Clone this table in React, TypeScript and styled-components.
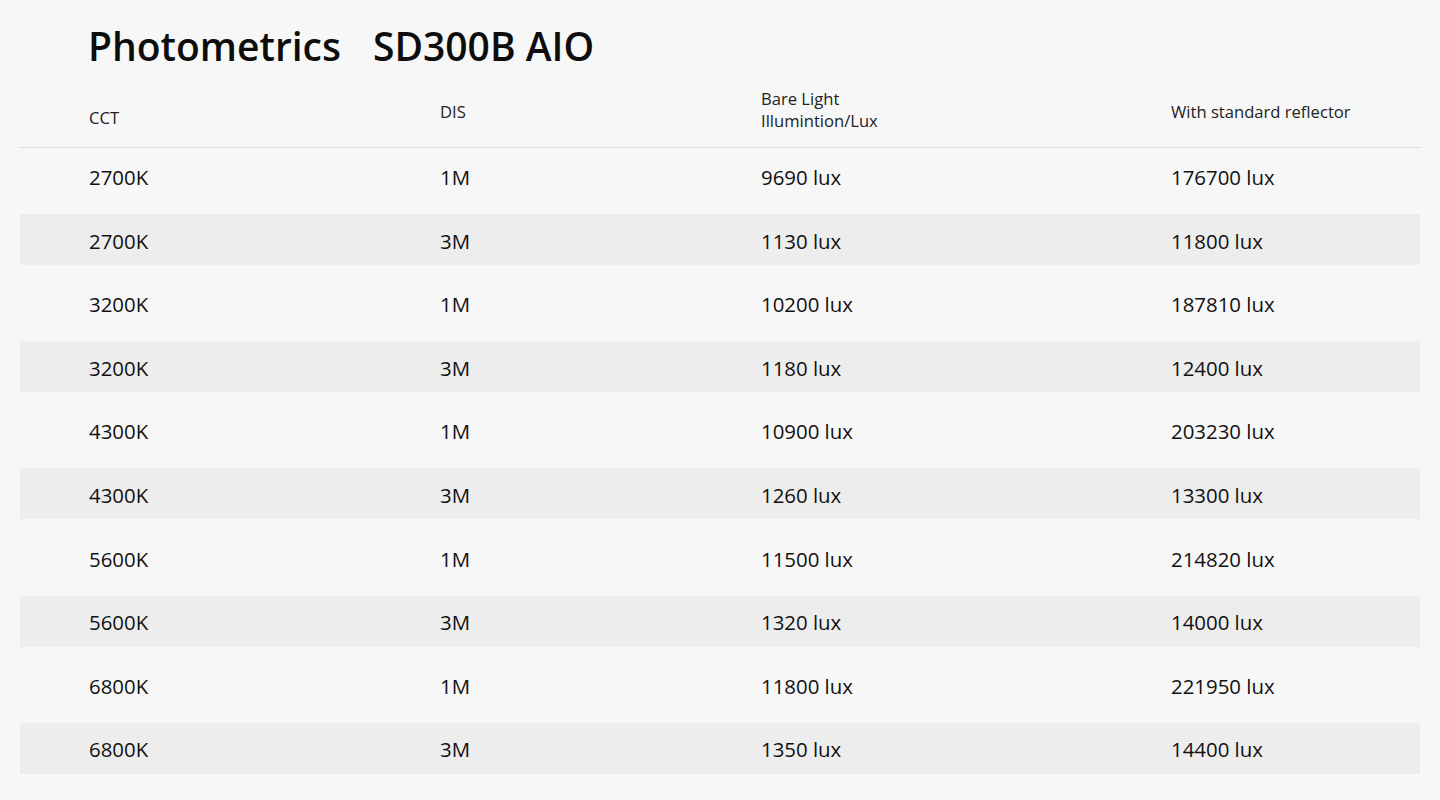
import React from "react";
import styled, { createGlobalStyle } from "styled-components";

const Global = createGlobalStyle`
  html, body { margin: 0; padding: 0; background: #f7f7f7; }
  body { font-family: "Open Sans", "Noto Sans", sans-serif; color: #111; }
`;

const Page = styled.div`
  width: 1440px;
  height: 800px;
  box-sizing: border-box;
  padding: 20px 20px 0;
  background: #f7f7f7;
  overflow: hidden;
`;

const Title = styled.h1`
  margin: 0;
  padding-left: 68px;
  display: flex;
  gap: 32px;
  font-size: 39px;
  font-weight: 600;
  line-height: 52px;
  color: #0d0d0d;
`;

const Grid = styled.div`
  display: grid;
  grid-template-columns: 351px 321px 410px 1fr;
  padding-left: 69px;
  align-items: center;
`;

const HeadRow = styled(Grid)`
  margin-top: 5px;
  height: 70px;
  border-bottom: 1px solid #dcdcdc;
`;

const HeadCell = styled.div<{ $drop?: number }>`
  font-size: 16.6px;
  line-height: 22px;
  color: #222;
  transform: translateY(${(p) => p.$drop ?? 0}px);
`;

const Body = styled.div`
  display: flex;
  flex-direction: column;
  gap: 12.6px;
  padding-top: 2.5px;
`;

const Row = styled(Grid)<{ $striped: boolean }>`
  height: 51px;
  background: ${(p) => (p.$striped ? "#ededed" : "transparent")};
`;

const Cell = styled.div`
  font-size: 20.4px;
  line-height: 28px;
  padding-top: 2px;
  color: #111;
`;

const rows: [string, string, string, string][] = [
  ["2700K", "1M", "9690 lux", "176700 lux"],
  ["2700K", "3M", "1130 lux", "11800 lux"],
  ["3200K", "1M", "10200 lux", "187810 lux"],
  ["3200K", "3M", "1180 lux", "12400 lux"],
  ["4300K", "1M", "10900 lux", "203230 lux"],
  ["4300K", "3M", "1260 lux", "13300 lux"],
  ["5600K", "1M", "11500 lux", "214820 lux"],
  ["5600K", "3M", "1320 lux", "14000 lux"],
  ["6800K", "1M", "11800 lux", "221950 lux"],
  ["6800K", "3M", "1350 lux", "14400 lux"],
];

export default function App() {
  return (
    <>
      <Global />
      <Page>
        <Title>
          <span>Photometrics</span>
          <span>SD300B AIO</span>
        </Title>
        <HeadRow>
          <HeadCell $drop={6}>CCT</HeadCell>
          <HeadCell>DIS</HeadCell>
          <HeadCell $drop={-2}>
            Bare Light
            <br />
            Illumintion/Lux
          </HeadCell>
          <HeadCell>With standard reflector</HeadCell>
        </HeadRow>
        <Body>
          {rows.map((r, i) => (
            <Row key={i} $striped={i % 2 === 1}>
              {r.map((c, j) => (
                <Cell key={j}>{c}</Cell>
              ))}
            </Row>
          ))}
        </Body>
      </Page>
    </>
  );
}
